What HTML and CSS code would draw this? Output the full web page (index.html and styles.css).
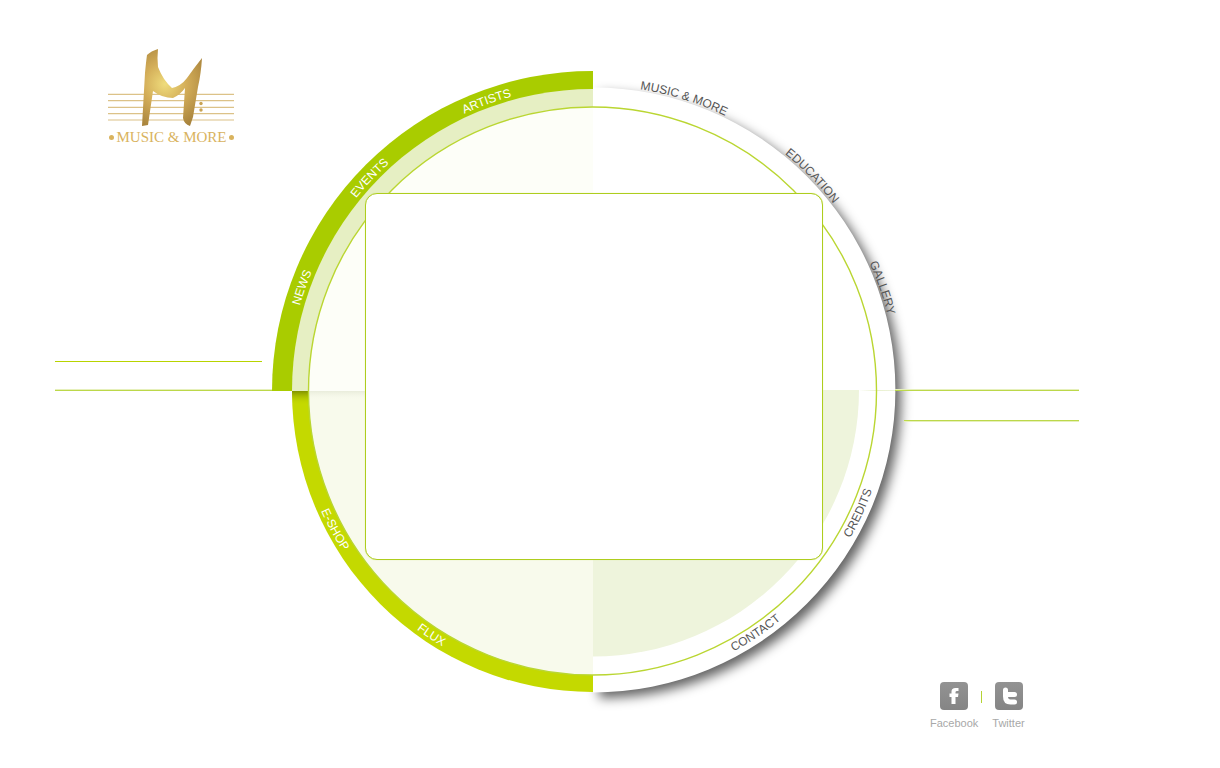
FILE: index.html
```html
<!DOCTYPE html>
<html lang="en">
<head>
  <meta charset="UTF-8">
  <title>Music &amp; More</title>
  <link rel="stylesheet" href="styles.css">
</head>
<body>

<div class="stage">

  <div class="left">
    <a class="logo" href="#">
      <svg class="logo-mark" viewBox="108 48 127 82" width="127" height="82">
        <defs>
          <radialGradient id="gold" gradientUnits="userSpaceOnUse" cx="165" cy="84" r="48">
            <stop offset="0" stop-color="#efdc7c"/>
            <stop offset="0.45" stop-color="#d3ad58"/>
            <stop offset="1" stop-color="#a5803a"/>
          </radialGradient>
        </defs>
        <g stroke="#dcc288" stroke-width="1.2">
          <line x1="108" y1="94.3" x2="234" y2="94.3"/>
          <line x1="108" y1="100.7" x2="234" y2="100.7"/>
          <line x1="108" y1="107.3" x2="234" y2="107.3"/>
          <line x1="108" y1="113.7" x2="234" y2="113.7"/>
          <line x1="108" y1="120" x2="234" y2="120"/>
        </g>
        <path fill="url(#gold)" d="M142 126 L145 73 Q146 62 147 55 Q151 51 158 49 Q157 58 158 67 Q163 80 172 88 Q181 86 187 78 Q194 68 202 58 Q201 74 198 87 L193 117 L190 126 Q184 124 183 118 L185 88 Q180 95 173 98 Q162 98 153 91 L148 125 Z"/>
        <circle cx="201" cy="103.5" r="1.7" fill="#c9a354"/>
        <circle cx="201" cy="110" r="1.7" fill="#c9a354"/>
      </svg>
      <span class="logo-name"><i class="logo-dot"></i>MUSIC &amp; MORE<i class="logo-dot"></i></span>
    </a>
    <div class="rule rule-top"></div>
    <div class="rule rule-main"></div>
  </div>

  <div class="wheel">
    <svg class="wheel-art" viewBox="272 0 640 768" width="640" height="768">
      <defs>
        <filter id="blur" x="-10%" y="-10%" width="120%" height="120%">
          <feGaussianBlur stdDeviation="6"/>
        </filter>
        <linearGradient id="fold" x1="0" y1="0" x2="0" y2="1">
          <stop offset="0" stop-color="#6b7a00" stop-opacity="0.75"/>
          <stop offset="1" stop-color="#c4d900" stop-opacity="0"/>
        </linearGradient>
        <linearGradient id="fold-soft" x1="0" y1="0" x2="0" y2="1">
          <stop offset="0" stop-color="#e9ecdb"/>
          <stop offset="1" stop-color="#f8faec" stop-opacity="0"/>
        </linearGradient>
        <linearGradient id="seam" x1="0" y1="0" x2="1" y2="0">
          <stop offset="0" stop-color="#ffffff"/>
          <stop offset="0.5" stop-color="#e9f0cf"/>
          <stop offset="1" stop-color="#eef4dc"/>
        </linearGradient>
        <path id="arc-out" d="M288 390 A304.5 304.5 0 1 1 897 390 A304.5 304.5 0 1 1 288 390"/>
        <path id="arc-in" d="M295.5 390 A297 297 0 1 0 889.5 390 A297 297 0 1 0 295.5 390"/>
      </defs>

      <!-- shadow, right half only -->
      <path d="M599 94 A302 302 0 0 1 599 698 Z" fill="#000" fill-opacity="0.62" filter="url(#blur)"/>

      <!-- right half -->
      <path d="M593 87.5 A302.5 302.5 0 0 1 593 692.5 Z" fill="#fff"/>
      <path d="M593 390 H859 A266.5 266.5 0 0 1 593 656.5 Z" fill="#eef4dc"/>
      <rect x="859" y="390" width="36" height="1" fill="url(#seam)"/>

      <!-- top left -->
      <path d="M593 391 H272 A320.5 320 0 0 1 593 71 Z" fill="#a9cc00"/>
      <path d="M593 391 H292 A300.5 302 0 0 1 593 89 Z" fill="#e6efc3"/>
      <path d="M593 391 H308.5 A284 284 0 0 1 593 107 Z" fill="#fdfef8"/>

      <!-- bottom left -->
      <path d="M593 391 H292 A300.5 301 0 0 0 593 692 Z" fill="#c4d900"/>
      <path d="M593 391 H308.5 A284 284 0 0 0 593 675 Z" fill="#f8faec"/>
      <rect x="292" y="391" width="17" height="14" fill="url(#fold)"/>
      <rect x="309" y="391" width="284" height="9" fill="url(#fold-soft)"/>

      <circle cx="592.5" cy="391" r="284" fill="none" stroke="#bad632" stroke-width="1.4"/>

      <g class="label label-dark">
        <text><textPath href="#arc-out" startOffset="29.84%">MUSIC &amp; MORE</textPath></text>
        <text><textPath href="#arc-out" startOffset="37.7%">EDUCATION</textPath></text>
        <text><textPath href="#arc-out" startOffset="44.6%">GALLERY</textPath></text>
        <text><textPath href="#arc-in" startOffset="43.1%">CREDITS</textPath></text>
        <text><textPath href="#arc-in" startOffset="34.4%">CONTACT</textPath></text>
      </g>
      <g class="label label-light">
        <text><textPath href="#arc-out" startOffset="5.4%">NEWS</textPath></text>
        <text><textPath href="#arc-out" startOffset="12.1%">EVENTS</textPath></text>
        <text><textPath href="#arc-out" startOffset="19.4%">ARTISTS</textPath></text>
        <text><textPath href="#arc-in" startOffset="7.9%">E-SHOP</textPath></text>
        <text><textPath href="#arc-in" startOffset="15.75%">FLUX</textPath></text>
      </g>
    </svg>
    <div class="panel"></div>
  </div>

  <div class="right">
    <div class="rule rule-main"></div>
    <div class="rule rule-low"></div>
    <div class="social">
      <a class="social-item" href="#">
        <span class="social-icon">
          <svg viewBox="0 0 28 28" width="28" height="28">
            <path fill="#fff" d="M11.5 22 V15 H9.5 V11.5 H11.5 V9.5 Q11.5 6 15.5 6 H18.5 V9 H17 Q15.5 9 15.5 10.2 V11.5 H18.5 L18 15 H15.5 V22 Z"/>
          </svg>
        </span>
        Facebook
      </a>
      <span class="social-sep"></span>
      <a class="social-item" href="#">
        <span class="social-icon">
          <svg viewBox="0 0 28 28" width="28" height="28">
            <path fill="none" stroke="#fff" stroke-width="5" stroke-linecap="round" stroke-linejoin="round" d="M10.5 8 V14.5 Q10.5 20 15.5 20 H19.5 M10.5 12.5 H19.5"/>
          </svg>
        </span>
        Twitter
      </a>
    </div>
  </div>

</div>

</body>
</html>
```

FILE: styles.css
```css
body {
  margin: 0;
  background: #fff;
  font-family: "Liberation Sans", Arial, sans-serif;
}
a {
  text-decoration: none;
  color: inherit;
}

.stage {
  display: flex;
  width: 1220px;
  height: 768px;
  overflow: hidden;
}

.left {
  width: 217px;
  padding-left: 55px;
  flex: none;
}
.logo {
  display: block;
  width: 127px;
  height: 361px;
  margin-left: 53px;
  padding-top: 48px;
  box-sizing: border-box;
}
.logo-mark {
  display: block;
}
.logo-name {
  display: flex;
  align-items: center;
  justify-content: space-between;
  font-family: "Liberation Serif", "Times New Roman", serif;
  font-size: 15px;
  line-height: 14px;
  white-space: nowrap;
  color: #d9b35e;
}
.logo-dot {
  width: 5px;
  height: 5px;
  margin: 0 1px;
  border-radius: 50%;
  background: #d9b35e;
}

.rule {
  height: 1px;
  background: #bcd84a;
}
.rule-main {
  box-shadow: 0 -1px 0 #e6f0bb;
}
.left .rule-top {
  width: 207px;
  background: #b8d400;
}
.left .rule-main {
  margin-top: 28px;
}

.wheel {
  position: relative;
  flex: none;
  width: 623px;
  height: 768px;
}
.wheel-art {
  display: block;
  overflow: visible;
}
.label text {
  font-size: 12px;
  text-anchor: middle;
  text-rendering: geometricPrecision;
}
.label-dark text {
  fill: #555;
}
.label-light text {
  fill: #fff;
}

.panel {
  position: absolute;
  left: 93px;
  top: 193px;
  width: 456px;
  height: 365px;
  background: #fff;
  border: 1px solid #aecd1e;
  border-radius: 12px;
  box-shadow: 0 0 1px #cfe37a;
}

.right {
  position: relative;
  flex: none;
  width: 184px;
  padding-top: 390px;
}
.rule-low {
  margin: 29px 0 0 9px;
  box-shadow: 0 1px 0 #e6f0bb;
}
.social {
  display: flex;
  align-items: flex-start;
  margin: 261px 0 0 35px;
}
.social-item {
  display: flex;
  flex-direction: column;
  align-items: center;
  gap: 7px;
  font-size: 11px;
  line-height: 13px;
  color: #a8a8a8;
}
.social-icon {
  display: block;
  width: 28px;
  height: 28px;
  border-radius: 4px;
  background: linear-gradient(#939393, #858585);
}
.social-icon svg {
  display: block;
}
.social-sep {
  width: 1px;
  height: 12px;
  margin: 9px 10px 0 3px;
  background: #b5d334;
}
```
